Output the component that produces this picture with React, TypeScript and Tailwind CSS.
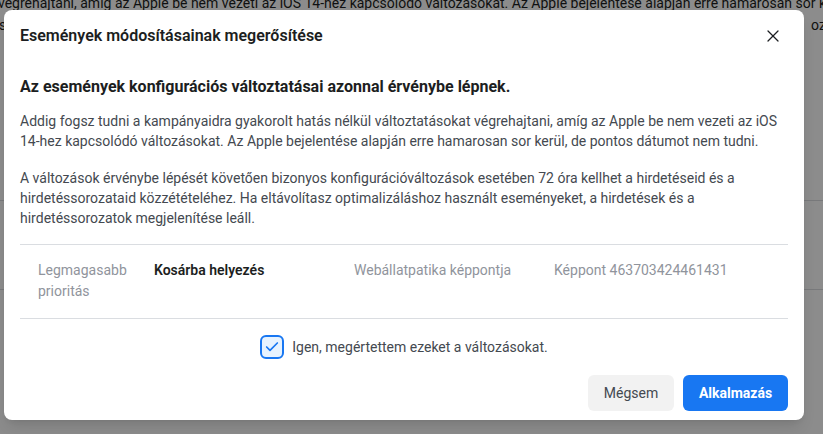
import { X, Check } from 'lucide-react'

const rows = [
  { label: 'Legmagasabb prioritás', event: 'Kosárba helyezés', source: 'Webállatpatika képpontja', pixel: 'Képpont 463703424461431' },
]

export default function App() {
  return (
    <div className="relative w-[823px] h-[434px] overflow-hidden bg-white font-['Roboto',sans-serif]">
      {/* page behind the dialog */}
      <div className="text-[14px] leading-[20px] text-[#1c1e21]">
        <p className="-mt-[7px] -ml-[2px] whitespace-nowrap">
          végrehajtani, amíg az Apple be nem vezeti az iOS 14-hez kapcsolódó változásokat. Az Apple bejelentése alapján erre hamarosan sor kerül.
        </p>
        <div className="mt-[2px] flex justify-between whitespace-nowrap">
          <span className="-ml-[1px]">s</span>
          <span className="-mr-[30px]">ozatok</span>
        </div>
        <div className="mt-[165px] border-t border-[#dadde1]" />
        <div className="mt-[88px] border-t border-[#dadde1]" />
      </div>

      <div className="absolute inset-0 bg-black/45 pl-[4px] pt-[10px]">
        <div className="w-[800px] rounded-lg bg-white shadow-lg">
          <div className="flex h-[52px] items-center justify-between px-4">
            <h2 className="text-[16px] font-semibold text-[#1c1e21]">Események módosításainak megerősítése</h2>
            <X className="mr-[5px] h-5 w-5 text-[#1c1e21]" strokeWidth={1.5} />
          </div>

          <div className="px-4">
            <h3 className="pt-[14px] text-[16px] font-bold leading-[22px] text-[#1c1e21]">
              Az események konfigurációs változtatásai azonnal érvénybe lépnek.
            </h3>
            <p className="mt-[13px] text-[14px] leading-[20px] text-[#444950]">
              Addig fogsz tudni a kampányaidra gyakorolt hatás nélkül változtatásokat végrehajtani, amíg az Apple be nem vezeti az iOS 14-hez kapcsolódó változásokat. Az Apple bejelentése alapján erre hamarosan sor kerül, de pontos dátumot nem tudni.
            </p>
            <p className="mt-[17px] text-[14px] leading-[20px] text-[#444950]">
              A változások érvénybe lépését követően bizonyos konfigurációváltozások esetében 72 óra kellhet a hirdetéseid és a hirdetéssorozataid közzétételéhez. Ha eltávolítasz optimalizáláshoz használt eseményeket, a hirdetések és a hirdetéssorozatok megjelenítése leáll.
            </p>

            <div className="mt-[16px] border-y border-[#dadde1]">
              {rows.map((r) => (
                <div key={r.pixel} className="grid grid-cols-[116px_200px_200px_1fr] pl-[18px] pt-[15px] pb-[16px] text-[14px] leading-[21px] text-[#90949c]">
                  <div className="w-[100px]">{r.label}</div>
                  <div className="font-semibold text-[#1c1e21]">{r.event}</div>
                  <div>{r.source}</div>
                  <div>{r.pixel}</div>
                </div>
              ))}
            </div>

            <label className="mt-[16px] flex items-center justify-center gap-2">
              <span className="flex h-6 w-6 items-center justify-center rounded-md border-2 border-[#1877f2] bg-[#e7f3ff]">
                <Check className="h-4 w-4 text-[#1877f2]" strokeWidth={2.5} />
              </span>
              <span className="text-[14px] text-[#444950]">Igen, megértettem ezeket a változásokat.</span>
            </label>

            <div className="mt-[16px] flex justify-end gap-[9px] pb-[9px]">
              <button className="h-9 w-[86px] rounded-md bg-[#f2f2f2] text-[14px] text-[#444950]">Mégsem</button>
              <button className="h-9 w-[105px] rounded-md bg-[#1877f2] text-[14px] font-bold text-white">Alkalmazás</button>
            </div>
          </div>
        </div>
      </div>
    </div>
  )
}
